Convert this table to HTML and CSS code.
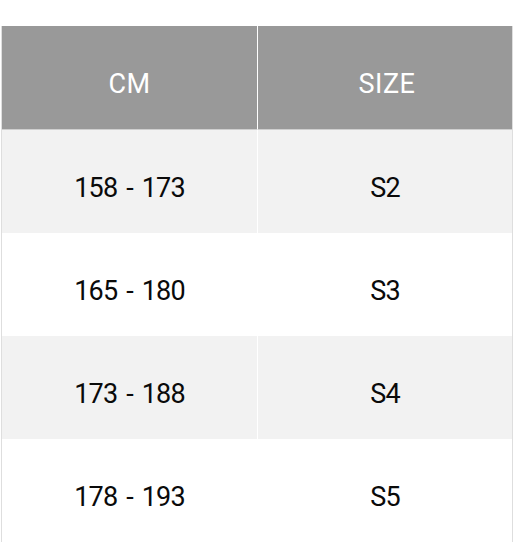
FILE: index.html
```html
<!DOCTYPE html>
<html lang="en">
<head>
<meta charset="utf-8">
<title>Size chart</title>
<link rel="stylesheet" href="styles.css">
</head>
<body>
<table class="size-table">
  <colgroup><col class="col-cm"><col class="col-size"></colgroup>
  <thead>
    <tr><th>CM</th><th>SIZE</th></tr>
  </thead>
  <tbody>
    <tr class="odd"><td>158 - 173</td><td>S2</td></tr>
    <tr><td>165 - 180</td><td>S3</td></tr>
    <tr class="odd"><td>173 - 188</td><td>S4</td></tr>
    <tr><td>178 - 193</td><td>S5</td></tr>
  </tbody>
</table>
</body>
</html>
```
FILE: styles.css
```css
html, body {
  margin: 0;
  padding: 0;
  background: #fff;
}
.size-table {
  margin: 26px 0 0 1px;
  width: 512px;
  table-layout: fixed;
  border-collapse: separate;
  border-spacing: 0;
  border-left: 1px solid #dedede;
  border-right: 1px solid #dedede;
  font-family: Roboto, "Noto Sans", sans-serif;
  font-size: 27px;
  text-align: center;
}
.col-cm { width: 256px; }
.size-table th,
.size-table td {
  height: 103px;
  box-sizing: border-box;
  padding: 13px 0 0;
  vertical-align: middle;
}
.size-table th:first-child,
.size-table td:first-child {
  border-right: 1px solid #fff;
}
.size-table th {
  background: #999999;
  color: #fff;
  font-weight: 400;
  letter-spacing: 0.5px;
  border-bottom: 1px solid #cfcfcf;
  height: 104px;
}
.size-table th + th {
  padding-left: 4px;
}
.size-table td {
  color: #0a0a0a;
  font-weight: 400;
  letter-spacing: -0.8px;
  word-spacing: 3px;
}
.size-table tr.odd td {
  background: #f2f2f2;
}
```
